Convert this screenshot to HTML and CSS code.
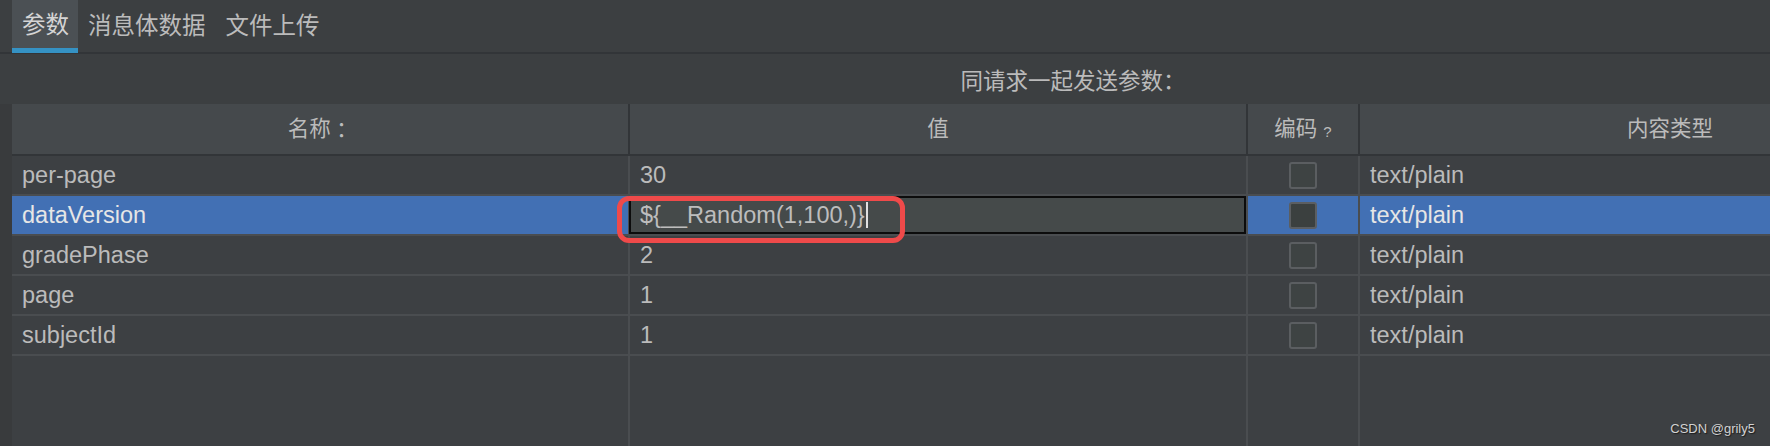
FILE: index.html
```html
<!DOCTYPE html>
<html lang="zh-CN">
<head>
<meta charset="utf-8">
<title>参数</title>
<link rel="stylesheet" href="styles.css">
</head>
<body>
<div class="app">
  <div class="tabs">
    <div class="tab active">参数</div>
    <div class="tab">消息体数据</div>
    <div class="tab">文件上传</div>
  </div>
  <div class="panel">
    <div class="hint">同请求一起发送参数<span class="colon">：</span></div>
    <div class="table-wrap">
      <div class="table">
        <div class="row head">
          <div class="cell c-name">名称<span class="colon">：</span></div>
          <div class="cell c-val">值</div>
          <div class="cell c-enc">编码<span class="q">?</span></div>
          <div class="cell c-type">内容类型</div>
        </div>
        <div class="row">
          <div class="cell c-name">per-page</div>
          <div class="cell c-val">30</div>
          <div class="cell c-enc"><span class="check"></span></div>
          <div class="cell c-type">text/plain</div>
        </div>
        <div class="row selected">
          <div class="cell c-name">dataVersion</div>
          <div class="cell c-val editing">
            <div class="editor">${__Random(1,100,)}<span class="caret"></span></div>
            <div class="annotation"></div>
          </div>
          <div class="cell c-enc"><span class="check"></span></div>
          <div class="cell c-type">text/plain</div>
        </div>
        <div class="row">
          <div class="cell c-name">gradePhase</div>
          <div class="cell c-val">2</div>
          <div class="cell c-enc"><span class="check"></span></div>
          <div class="cell c-type">text/plain</div>
        </div>
        <div class="row">
          <div class="cell c-name">page</div>
          <div class="cell c-val">1</div>
          <div class="cell c-enc"><span class="check"></span></div>
          <div class="cell c-type">text/plain</div>
        </div>
        <div class="row">
          <div class="cell c-name">subjectId</div>
          <div class="cell c-val">1</div>
          <div class="cell c-enc"><span class="check"></span></div>
          <div class="cell c-type">text/plain</div>
        </div>
        <div class="row filler">
          <div class="cell c-name"></div>
          <div class="cell c-val"></div>
          <div class="cell c-enc"></div>
          <div class="cell c-type"></div>
        </div>
      </div>
    </div>
  </div>
  <div class="watermark">CSDN @grily5</div>
</div>
</body>
</html>
```

FILE: styles.css
```css
* { box-sizing: border-box; }

html, body {
  margin: 0;
  padding: 0;
  background: #3c3f41;
}

body {
  width: 1770px;
  height: 446px;
  overflow: hidden;
  font-family: "Liberation Sans", "Noto Sans CJK SC", sans-serif;
  color: #bbbbbb;
}

.app {
  position: relative;
  width: 1770px;
  height: 446px;
  display: flex;
  flex-direction: column;
}

/* tabs */
.tabs {
  display: flex;
  align-items: flex-start;
  height: 54px;
  padding-left: 12px;
  border-bottom: 2px solid #323538;
  flex-shrink: 0;
}

.tab {
  height: 52px;
  padding: 0 10px;
  font-size: 23.5px;
  line-height: 52px;
  color: #bbbbbb;
  white-space: nowrap;
}

.tab.active {
  height: 53px;
  padding: 2px 9px 0 10px;
  line-height: 46px;
  background: #4b5054;
  border-bottom: 5px solid #3592c4;
  color: #d4d4d4;
}

.colon {
  font-family: "Noto Sans CJK TC", "Noto Sans CJK SC", sans-serif;
}

/* panel */
.panel {
  flex: 1;
  display: flex;
  flex-direction: column;
  width: 2134px;
}

.hint {
  height: 50px;
  line-height: 50px;
  padding-left: 12px;
  text-align: center;
  font-size: 22.5px;
  color: #bbbbbb;
}

.table-wrap {
  flex: 1;
  padding-left: 12px;
  background: #393b3d;
  display: flex;
}

.table {
  width: 1968px;
  display: flex;
  flex-direction: column;
  background: #3d4043;
}

.row {
  display: grid;
  grid-template-columns: 618px 618px 112px 620px;
  height: 40px;
  border-bottom: 2px solid #4a4d50;
  font-size: 23.5px;
  line-height: 38px;
}

.cell {
  border-right: 2px solid #4a4d50;
  padding-left: 10px;
  white-space: nowrap;
  display: flex;
  align-items: center;
}

.c-type { border-right: none; }

.row.head {
  height: 52px;
  background: #45494c;
  border-bottom: 2px solid #323538;
  font-size: 21.5px;
}

.row.head .cell {
  justify-content: center;
  padding-left: 0;
  border-right-color: #323538;
}

.q {
  font-size: 15px;
  margin-left: 6px;
  margin-top: 6px;
}

.c-enc {
  justify-content: center;
  padding-left: 0;
}

.check {
  width: 28px;
  height: 27px;
  border: 2px solid #5b5e61;
  border-radius: 3px;
  background: #3e4343;
}

.row.selected {
  background: #4270b4;
  color: #e6e6e6;
}

.row.selected .check {
  background: #3b403f;
}

.editing {
  position: relative;
  padding-left: 0;
  margin-left: -1px;
}

.editor {
  width: 100%;
  height: 38px;
  border: 2px solid #0c0c0c;
  background: #454a4a;
  color: #bdbdbd;
  padding-left: 9px;
  display: flex;
  align-items: center;
}

.caret {
  display: inline-block;
  width: 2px;
  height: 26px;
  background: #e0e0e0;
  margin-left: 1px;
}

.annotation {
  position: absolute;
  left: -12px;
  top: 0;
  width: 288px;
  height: 47px;
  border: 5px solid #ef4a4a;
  border-radius: 12px;
}

.row.filler {
  flex: 1;
  height: auto;
  border-bottom: none;
}

.watermark {
  position: absolute;
  right: 15px;
  bottom: 10px;
  font-size: 13px;
  color: #d2d2d2;
  text-shadow: 1px 1px 1px #1e1e1e;
}
```
